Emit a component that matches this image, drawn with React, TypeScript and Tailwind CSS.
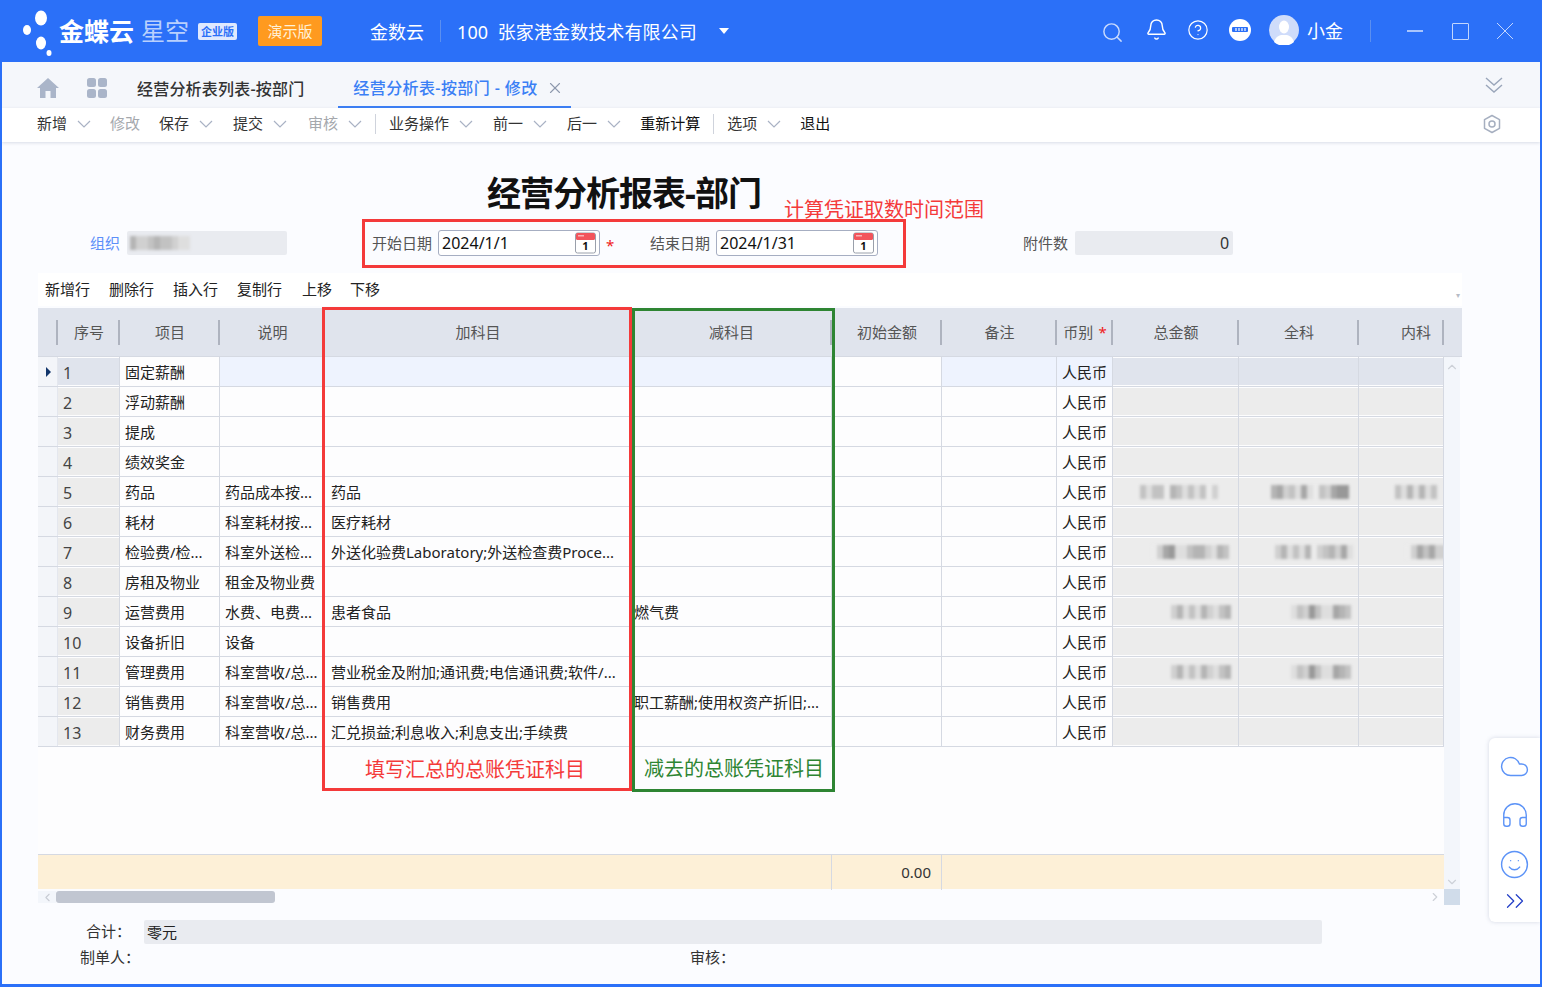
import { ChevronDown, ChevronLeft, ChevronRight, ChevronUp, ChevronsRight, Cloud, Headphones, Search, Bell, CircleHelp, Smile, X } from "lucide-react";

const GRID = "grid grid-cols-[20px_62px_100px_105px_306px_201px_110px_115px_56px_126px_120px_85px]";

const toolbar = [
  { label: "新增", arrow: true },
  { label: "修改", muted: true },
  { label: "保存", arrow: true },
  { label: "提交", arrow: true, extra: "ml-[1px]" },
  { label: "审核", arrow: true, muted: true, sep: true, extra: "ml-[2px]" },
  { label: "业务操作", arrow: true },
  { label: "前一", arrow: true, extra: "ml-[1px]" },
  { label: "后一", arrow: true, extra: "ml-[1px]" },
  { label: "重新计算", dark: true, sep: true },
  { label: "选项", arrow: true },
  { label: "退出", dark: true },
];

const rows = [
  { item: "固定薪酬" },
  { item: "浮动薪酬" },
  { item: "提成" },
  { item: "绩效奖金" },
  { item: "药品", note: "药品成本按...", add: "药品", blur: ["a", "b", "c"] },
  { item: "耗材", note: "科室耗材按...", add: "医疗耗材" },
  { item: "检验费/检...", note: "科室外送检...", add: "外送化验费Laboratory;外送检查费Proce...", blur: ["d", "e", "f"] },
  { item: "房租及物业", note: "租金及物业费" },
  { item: "运营费用", note: "水费、电费...", add: "患者食品", sub: "燃气费", blur: ["g", "h"] },
  { item: "设备折旧", note: "设备" },
  { item: "管理费用", note: "科室营收/总...", add: "营业税金及附加;通讯费;电信通讯费;软件/...", blur: ["g", "h"] },
  { item: "销售费用", note: "科室营收/总...", add: "销售费用", sub: "职工薪酬;使用权资产折旧;..." },
  { item: "财务费用", note: "科室营收/总...", add: "汇兑损益;利息收入;利息支出;手续费" },
];

// mosaic strips standing in for the blurred figures in the screenshot
const mosaics: Record<string, string> = {
  a: "3133043131302",
  b: "4523151032566",
  c: "3141413",
  d: "0256113442143",
  e: "2413140234251",
  f: "0253522",
  g: "2413142134",
  h: "1326311543",
  z: "4223433211",
};

function Mosaic({ code, left }: { code: string; left: number }) {
  return (
    <div className="flex h-full items-center blur-[1.5px]" style={{ paddingLeft: left }}>
      {mosaics[code].split("").map((c, i) => (
        <span
          key={i}
          className="h-[14px] w-[6px] shrink-0"
          style={{ backgroundColor: `rgb(${236 - Number(c) * 14},${236 - Number(c) * 14},${236 - Number(c) * 14})` }}
        />
      ))}
    </div>
  );
}

function CalendarIcon() {
  return (
    <svg width="21" height="22" viewBox="0 0 21 22" className="shrink-0">
      <rect x="0.5" y="1" width="20" height="20" rx="2" fill="#fff" stroke="#9aa0ab" />
      <rect x="1" y="1" width="19" height="7" rx="1.5" fill="#f2545b" />
      <rect x="3" y="3" width="6" height="1.5" fill="#f9b1b4" />
      <text x="10.5" y="18" textAnchor="middle" fontSize="11" fontWeight="700" fill="#111">1</text>
    </svg>
  );
}

function Chev() {
  return (
    <svg width="14" height="8" viewBox="0 0 14 8" fill="none" stroke="#a9b2c4" strokeWidth="1.2" className="shrink-0">
      <path d="M1 1 L7 7 L13 1" />
    </svg>
  );
}

function DateField({ value }: { value: string }) {
  return (
    <div className="flex h-[26px] w-[162px] items-center justify-between rounded-[3px] border border-[#a6aec2] bg-white pl-[3px] pr-[3px] text-[16px] text-[#111]">
      {value}
      <CalendarIcon />
    </div>
  );
}

function HeadCell({ label, star, sep = true, align }: { label?: string; star?: boolean; sep?: boolean; align?: string }) {
  return (
    <div className="flex items-center">
      <div className={`min-w-0 flex-1 whitespace-nowrap text-[15px] text-[#555] ${align ?? "pl-[2px] text-center"}`}>
        {label}
        {star && <span className="ml-[5px] text-[#f02020]">*</span>}
      </div>
      {sep && <span className="h-[25px] w-[2px] shrink-0 bg-[#aeb3bf]" />}
    </div>
  );
}

function Row({ row, index }: { row: (typeof rows)[number]; index: number }) {
  const active = index === 0;
  const hl = active ? "bg-[#eef3fe]" : "";
  const cell = "overflow-hidden whitespace-nowrap border-r border-[#d5d9e2] leading-[30px]";
  const grayCell = `h-[27px] ${active ? "bg-[#e0e4ed]" : "bg-[#ececec]"}`;
  return (
    <div className={`${GRID} h-[30px] border-b border-[#d5d9e2] text-[15px] text-[#222]`}>
      <div className="flex items-center justify-center border-r border-[#e4e7ee] bg-[#f3f5f9] pl-[2px]">
        {active && <span className="h-0 w-0 border-y-[5px] border-l-[5px] border-y-transparent border-l-[#12356b]" />}
      </div>
      <div className={`${cell} pt-[1px]`}>
        <div className={`${grayCell} pl-[5px] pt-[2px] text-[16px] leading-[26px] text-[#444]`}>{index + 1}</div>
      </div>
      <div className={`${cell} px-[5px]`}>{row.item}</div>
      <div className={`${cell} px-[5px] ${hl}`}>{row.note}</div>
      <div className={`${cell} pl-[6px] ${hl}`}>{row.add}</div>
      <div className={`${cell} pl-[3px] ${hl}`}>{row.sub}</div>
      <div className={cell} />
      <div className={`${cell} ${hl}`} />
      <div className={`${cell} pl-[5px] ${hl}`}>人民币</div>
      {[0, 1, 2].map((k) => (
        <div key={k} className="overflow-hidden border-r border-[#d5d9e2] pt-[1px]">
          <div className={grayCell}>
            {row.blur?.[k] && (
              <Mosaic code={row.blur[k]} left={index === 4 ? [27, 32, 36][k] : index === 6 ? [38, 36, 46][k] : [58, 52, 0][k]} />
            )}
          </div>
        </div>
      ))}
    </div>
  );
}

export default function App() {
  return (
    <div className="relative flex h-[987px] w-[1542px] flex-col overflow-hidden border-x-2 border-b-[3px] border-[#2b70f8] bg-[#fbfcff] font-['Noto_Sans','Noto_Sans_CJK_SC',sans-serif]">
      {/* top bar */}
      <header className="-mx-[2px] flex h-[62px] shrink-0 items-center bg-[#2b70f8] text-white">
        <svg width="40" height="50" viewBox="0 0 40 50" className="ml-[20px] shrink-0">
          <ellipse cx="21" cy="12" rx="6" ry="7.5" fill="#fff" />
          <ellipse cx="7" cy="24" rx="4" ry="5" fill="#fff" />
          <ellipse cx="21" cy="37" rx="5" ry="6.5" fill="#fff" />
          <ellipse cx="29" cy="47" rx="2.5" ry="3" fill="#fff" />
        </svg>
        <span className="-ml-[1px] text-[25px] font-bold leading-none">金蝶云</span>
        <span className="ml-[7px] text-[24px] leading-none text-[#b9d0fd]">星空</span>
        <span className="ml-[9px] flex h-[17px] w-[39px] items-center justify-center rounded-[2px] bg-[#dfe9fe] text-[11px] font-bold leading-none text-[#2b70f8]">
          企业版
        </span>
        <span className="ml-[21px] flex h-[30px] w-[64px] items-center justify-center rounded-[2px] bg-[#ff9a1f] text-[15px] text-[#fff1d8]">
          演示版
        </span>
        <span className="ml-[48px] mt-[2px] text-[18px]">金数云</span>
        <span className="ml-[16px] mr-[16px] h-[22px] w-px bg-[#5b8ff0]" />
        <span className="mt-[2px] text-[18px] tracking-[0.1px]">100&nbsp; 张家港金数技术有限公司</span>
        <span className="ml-[22px] h-0 w-0 border-x-[5px] border-t-[6px] border-x-transparent border-t-white" />
        <div className="ml-auto flex items-center">
          <Search size={23} strokeWidth={1.5} className="mt-[2px] text-[#c9dafd]" />
          <Bell size={23} strokeWidth={1.5} className="ml-[21px] -mt-[4px]" />
          <CircleHelp size={22} strokeWidth={1.3} className="ml-[19px] -mt-[3px]" />
          <span className="ml-[20px] -mt-[3px] flex h-[22px] w-[22px] items-center justify-center rounded-full bg-white">
            <span className="flex h-[5px] w-[16px] items-center justify-center gap-[1px] rounded-[1px] bg-[#2b70f8]">
              <i className="h-[3px] w-[2px] bg-[#a9c5fc]" />
              <i className="h-[3px] w-[2px] bg-[#a9c5fc]" />
              <i className="h-[3px] w-[2px] bg-[#a9c5fc]" />
              <i className="h-[3px] w-[2px] bg-[#a9c5fc]" />
            </span>
          </span>
          <svg width="30" height="30" viewBox="0 0 30 30" className="ml-[18px] -mt-[2px]">
            <circle cx="15" cy="15" r="15" fill="#cfdcfa" />
            <ellipse cx="15" cy="12" rx="5" ry="6.5" fill="#fff" />
            <path d="M5 27 C7 20 12 20 15 20 C18 20 23 20 25 27 A15 15 0 0 1 5 27Z" fill="#fff" />
          </svg>
          <span className="ml-[8px] text-[18px]">小金</span>
          <span className="ml-[27px] h-[22px] w-px bg-[#5b8ff0]" />
          <span className="ml-[36px] h-[2px] w-[16px] bg-[#a9c5fc]" />
          <span className="ml-[29px] h-[17px] w-[17px] rounded-[1px] border border-[#c3d6fd]" />
          <svg width="18" height="18" viewBox="0 0 18 18" fill="none" stroke="#c3d6fd" className="ml-[27px] mr-[28px]">
            <path d="M1 1 L17 17 M17 1 L1 17" />
          </svg>
        </div>
      </header>

      {/* tabs */}
      <div className="flex h-[46px] shrink-0 items-center bg-[#f5f7fb] pl-[35px] pr-[36px] pt-[6px]">
        <svg width="22" height="22" viewBox="0 0 22 22" className="shrink-0">
          <path d="M11 1 L22 11 H19 V21 H13.5 V14 H8.5 V21 H3 V11 H0Z" fill="#aab5c9" />
        </svg>
        <svg width="20" height="20" viewBox="0 0 20 20" className="ml-[28px] shrink-0">
          <rect x="0" y="0" width="9" height="9" rx="2.5" fill="#aab5c9" />
          <rect x="11" y="0" width="9" height="9" rx="2.5" fill="#aab5c9" />
          <rect x="0" y="11" width="9" height="9" rx="2.5" fill="#aab5c9" />
          <rect x="11" y="11" width="9" height="9" rx="2.5" fill="#aab5c9" />
        </svg>
        <span className="ml-[30px] mt-[2px] text-[16px] font-medium tracking-[0.2px] text-[#333]">经营分析表列表-按部门</span>
        <div className="ml-[34px] flex h-[40px] w-[233px] items-center border-b-2 border-[#3b7ff5] pl-[15px] pt-[2px]">
          <span className="whitespace-nowrap text-[16px] font-medium tracking-[0.4px] text-[#3b7ff5]">经营分析表-按部门 - 修改</span>
          <X size={18} strokeWidth={1.5} className="ml-[8px] text-[#8d99ad]" />
        </div>
        <svg width="18" height="18" viewBox="0 0 18 18" fill="none" stroke="#9aa6ba" strokeWidth="1.4" className="ml-auto -mt-[7px] mr-[1px]">
          <path d="M1 2 L9 9 L17 2 M1 9 L9 16 L17 9" />
        </svg>
      </div>

      {/* action bar */}
      <div className="flex h-[34px] shrink-0 items-center gap-[19px] bg-white pb-[3px] pl-[35px] pr-[38px] text-[15px] text-[#333] shadow-[0_1px_3px_rgba(120,130,160,0.25)]">
        {toolbar.map((t) => (
          <div key={t.label} className="contents">
            <div className={`flex items-center gap-[10px] ${t.extra ?? ""} ${t.muted ? "text-[#a5a8ad]" : t.dark ? "text-[#111]" : ""}`}>
              {t.label}
              {t.arrow && <Chev />}
            </div>
            {t.sep && <span className="-mx-[6px] h-[20px] w-px bg-[#cfd3dc]" />}
          </div>
        ))}
        <svg width="20" height="20" viewBox="0 0 20 20" fill="none" stroke="#a6afc0" strokeWidth="1.5" className="ml-auto mt-[1px]">
          <path d="M10 1.5 L17.5 5.7 V14.3 L10 18.5 L2.5 14.3 V5.7Z" strokeLinejoin="round" />
          <circle cx="10" cy="10" r="3" />
        </svg>
      </div>

      {/* bill head */}
      <div className="h-[89px] shrink-0 pl-[485px] pt-[28px] text-[34px] font-bold leading-[46px] tracking-[-1px] text-[#111]">
        经营分析报表-部门
      </div>
      <div className="flex h-[24px] shrink-0 items-center text-[15px] text-[#555]">
        <span className="ml-[88px] text-[#5b8ff9]">组织</span>
        <div className="ml-[7px] h-[24px] w-[160px] rounded-[2px] bg-[#e9ebf0]">
          <Mosaic code="z" left={3} />
        </div>
        <span className="ml-[85px]">开始日期</span>
        <div className="ml-[6px]">
          <DateField value="2024/1/1" />
        </div>
        <span className="ml-[6px] mt-[4px] w-[8px] text-[#f02020]">*</span>
        <span className="ml-[36px]">结束日期</span>
        <div className="ml-[6px]">
          <DateField value="2024/1/31" />
        </div>
        <span className="ml-[145px]">附件数</span>
        <div className="ml-[7px] h-[24px] w-[158px] rounded-[2px] bg-[#e9ebf0] pr-[4px] text-right text-[16px] leading-[24px] text-[#333]">
          0
        </div>
      </div>

      {/* entry grid */}
      <div className="ml-[36px] mt-[18px] w-[1424px] shrink-0">
        <div className="flex h-[33px] items-center bg-white pl-[7px] text-[15px] text-[#222]">
          <span>新增行</span>
          <span className="ml-[19px]">删除行</span>
          <span className="ml-[19px]">插入行</span>
          <span className="ml-[19px]">复制行</span>
          <span className="ml-[20px]">上移</span>
          <span className="ml-[18px]">下移</span>
          <span className="ml-auto mr-[2px] mt-[11px] text-[8px] leading-[8px] text-[#b7bcc6]">▾</span>
        </div>
        <div className="mt-[2px] flex h-[49px] border-b border-[#d5d9e2] bg-[#e0e4ed]">
          <div className={`${GRID} h-full`}>
            <HeadCell />
            <HeadCell label="序号" />
            <HeadCell label="项目" />
            <HeadCell label="说明" />
            <HeadCell label="加科目" />
            <HeadCell label="减科目" />
            <HeadCell label="初始金额" />
            <HeadCell label="备注" />
            <HeadCell label="币别" star />
            <HeadCell label="总金额" />
            <HeadCell label="全科" />
            <HeadCell label="内科" align="pr-[11px] text-right" />
          </div>
        </div>

        <div className="flex h-[532px]">
          <div className="flex w-[1406px] flex-col bg-[#fdfdfe]">
            <div className="h-[497px] shrink-0">
              {rows.map((r, i) => (
                <Row key={r.item} row={r} index={i} />
              ))}
            </div>
            <div className={`${GRID} h-[35px] shrink-0 border-t border-[#d5d9e2] bg-[#fdf0d7] text-[15px] leading-[35px] text-[#333]`}>
              <div className="col-span-6 border-r border-[#d5d9e2]" />
              <div className="border-r border-[#d5d9e2] pr-[10px] text-right">0.00</div>
            </div>
          </div>
          <div className="flex w-[16px] flex-col items-center justify-between bg-[#f3f6fb] pt-[3px]">
            <ChevronUp size={14} className="text-[#cdd1d8]" />
            <ChevronDown size={14} className="text-[#cdd1d8]" />
          </div>
        </div>

        <div className="flex h-[16px] w-[1422px] items-center">
          <div className="flex h-[12px] w-[18px] items-center justify-center bg-[#f3f6fb]">
            <ChevronLeft size={13} className="text-[#c8ccd4]" />
          </div>
          <div className="h-[12px] w-[219px] rounded-[3px] bg-[#c1c6d1]" />
          <ChevronRight size={14} className="ml-auto mr-[2px] text-[#cdd1d8]" />
          <div className="h-[16px] w-[16px] bg-[#d0dcea]" />
        </div>
      </div>

      {/* bill foot */}
      <div className="mt-[15px] flex h-[24px] shrink-0 items-center text-[15px] text-[#333]">
        <span className="ml-[84px] -mt-[2px] w-[58px]">合计：</span>
        <div className="h-[24px] w-[1178px] rounded-[2px] bg-[#e9ebf0] pl-[3px] leading-[24px] text-[#222]">零元</div>
      </div>
      <div className="mt-[3px] flex h-[20px] shrink-0 items-center text-[15px] text-[#333]">
        <span className="ml-[78px]">制单人：</span>
        <span className="ml-[550px]">审核：</span>
      </div>

      {/* side helper, floats over the page */}
      <div className="absolute left-[1487px] top-[738px] flex h-[184px] w-[51px] flex-col items-center rounded-l-[6px] bg-white pt-[13px] text-[#5c93f7] shadow-[0_0_4px_rgba(120,130,160,0.3)]">
        <Cloud size={31} strokeWidth={1.1} />
        <Headphones size={30} strokeWidth={1.1} className="mt-[18px]" />
        <Smile size={31} strokeWidth={1.1} className="mt-[19px]" />
        <ChevronsRight size={30} strokeWidth={1} className="mt-[6px] text-[#2440c8]" />
      </div>

      {/* red and green annotations drawn on top of the screenshot */}
      <div className="absolute left-[360px] top-[219px] h-[49px] w-[544px] border-[3px] border-[#f43a3a]" />
      <div className="absolute left-[782px] top-[195px] whitespace-nowrap text-[20px] leading-[30px] text-[#f43a3a]">计算凭证取数时间范围</div>
      <div className="absolute left-[320px] top-[307px] h-[484px] w-[310px] border-[3px] border-[#f43a3a]" />
      <div className="absolute left-[630px] top-[308px] h-[484px] w-[203px] border-[3px] border-[#2e8533]" />
      <div className="absolute left-[363px] top-[755px] whitespace-nowrap text-[20px] leading-[30px] text-[#f43a3a]">填写汇总的总账凭证科目</div>
      <div className="absolute left-[642px] top-[754px] whitespace-nowrap text-[20px] leading-[30px] text-[#2e8533]">减去的总账凭证科目</div>
    </div>
  );
}
